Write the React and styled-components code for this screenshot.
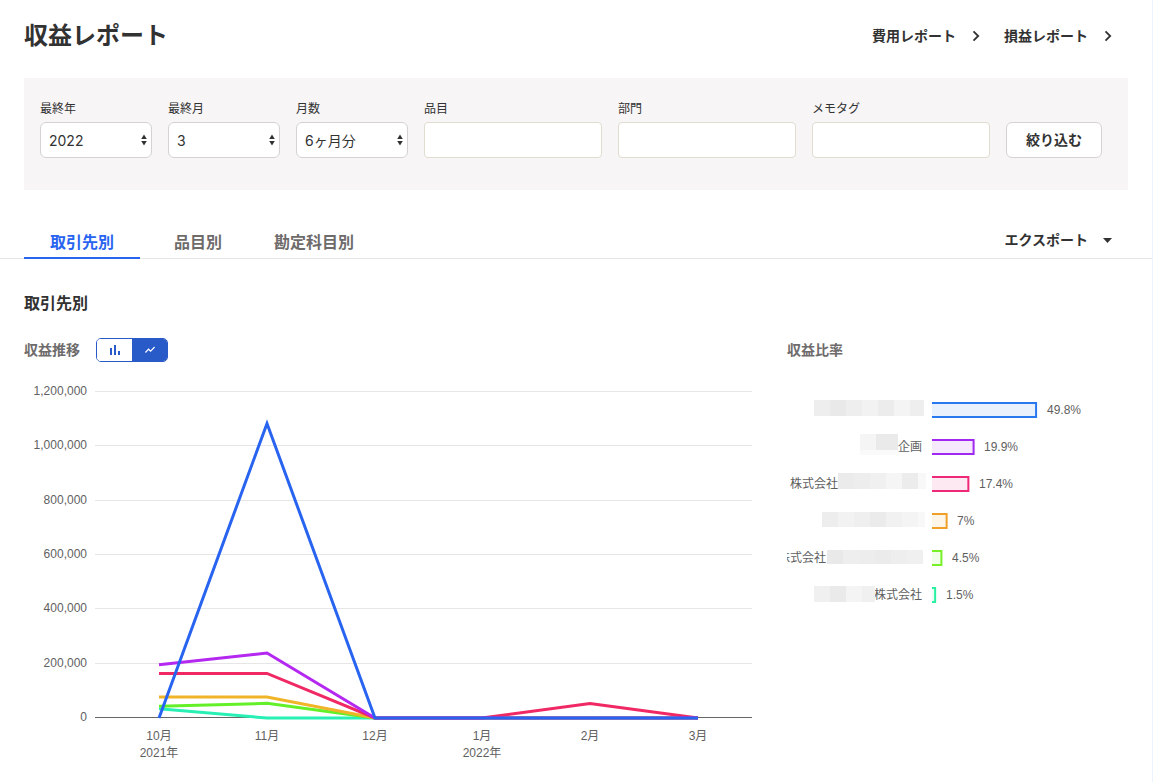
import React, { useState } from 'react';
import styled, { createGlobalStyle, css } from 'styled-components';

const GlobalStyle = createGlobalStyle`
  *, *::before, *::after { box-sizing: border-box; }
  body {
    margin: 0;
    background: #fff;
    color: #323232;
    font-family: Inter, "Noto Sans CJK JP", sans-serif;
    font-size: 14px;
    line-height: 20px;
  }
  button, input, select { font: inherit; color: inherit; }
`;

const Page = styled.div`
  min-height: 100vh;
  padding-bottom: 16px;
  border-right: 1px solid #ebf3ff;
`;

const Header = styled.header`
  display: flex;
  align-items: center;
  justify-content: space-between;
  padding: 16px 40px 22px 24px;
`;

const PageTitle = styled.h1`
  margin: 0;
  font-size: 24px;
  line-height: 40px;
  font-weight: 700;
`;

const ReportLinks = styled.nav`
  display: flex;
  gap: 24px;
`;

const actionStyle = css`
  display: inline-flex;
  align-items: center;
  gap: 16px;
  padding: 0;
  border: 0;
  background: none;
  color: #323232;
  font-size: 14px;
  line-height: 20px;
  font-weight: 700;
  text-decoration: none;
  white-space: nowrap;
  cursor: pointer;
`;

const ReportLink = styled.a`${actionStyle}`;
const ExportButton = styled.button`${actionStyle}`;

const FilterPanel = styled.form`
  display: flex;
  flex-wrap: wrap;
  align-items: flex-end;
  gap: 16px;
  margin: 0 24px;
  padding: 21px 16px 32px;
  background: #f7f5f6;
`;

const Field = styled.label`
  display: flex;
  flex: 0 1 ${(p) => p.$width};
  flex-direction: column;
  gap: 3px;
  font-size: 12px;
`;

const SelectBox = styled.span`
  position: relative;
  display: block;
`;

const Select = styled.select`
  appearance: none;
  display: block;
  width: 100%;
  height: 36px;
  padding: 2px 24px 0 8px;
  border: 1px solid #d7d2d2;
  border-radius: 6px;
  background: #fff;
  font-size: 14px;
`;

const SelectArrows = styled.svg`
  position: absolute;
  top: 12px;
  right: 5px;
  pointer-events: none;
`;

const TextInput = styled.input`
  width: 100%;
  height: 36px;
  padding: 0 8px;
  border: 1px solid #e1dcd0;
  border-radius: 4px;
  background: #fff;
  font-size: 14px;
`;

const FilterButton = styled.button`
  width: 96px;
  height: 36px;
  padding: 0;
  border: 1px solid #d7d2d2;
  border-radius: 6px;
  background: #fff;
  font-weight: 700;
  cursor: pointer;
`;

const TabBar = styled.div`
  display: flex;
  align-items: center;
  justify-content: space-between;
  margin-top: 32px;
  padding: 0 40px 0 24px;
  border-bottom: 1px solid #e6e6e6;
`;

const Tabs = styled.div`
  display: flex;
  margin-bottom: -1px;
`;

const Tab = styled.button`
  min-width: 116px;
  padding: 8px 16px 3px;
  border: 0;
  border-bottom: 2px solid ${(p) => (p.$active ? '#2864f0' : 'transparent')};
  background: none;
  color: ${(p) => (p.$active ? '#2864f0' : '#6e6b6b')};
  font-size: 16px;
  line-height: 24px;
  font-weight: 700;
  white-space: nowrap;
  cursor: pointer;
`;

const Report = styled.main`
  padding: 32px 24px 0;
`;

const SectionTitle = styled.h2`
  margin: 0 0 23px;
  font-size: 16px;
  line-height: 24px;
  font-weight: 700;
`;

const ChartGrid = styled.div`
  display: grid;
  grid-template-columns: minmax(0, 728fr) minmax(0, 341fr);
  gap: 35px;
`;

const ChartHeader = styled.div`
  display: flex;
  align-items: center;
  gap: 16px;
  height: 24px;
  margin-bottom: 16px;
`;

const ChartTitle = styled.h3`
  margin: 0;
  color: #6e6b6b;
  font-size: 14px;
  line-height: 20px;
  font-weight: 700;
`;

const Toggle = styled.div`
  display: flex;
  width: 72px;
  height: 24px;
  overflow: hidden;
  border: 1px solid #285ac8;
  border-radius: 5px;
`;

const ToggleButton = styled.button`
  display: flex;
  flex: 1;
  align-items: center;
  justify-content: center;
  padding: 0;
  border: 0;
  background: ${(p) => (p.$active ? '#285ac8' : '#fff')};
  color: ${(p) => (p.$active ? '#fff' : '#285ac8')};
  cursor: pointer;
`;

const Chart = styled.svg`
  display: block;
  width: 100%;
  height: auto;
  font-family: "Liberation Sans", "Noto Sans CJK JP", sans-serif;
  font-size: 12px;
`;

const ChartText = styled.text`
  fill: #5f5f5f;
`;

const range = (from, to) => Array.from({ length: to - from + 1 }, (_, i) => from + i);

const reportLinks = ['費用レポート', '損益レポート'];
const selects = [
  { label: '最終年', value: '2022', options: ['2020', '2021', '2022'] },
  { label: '最終月', value: '3', options: range(1, 12).map(String) },
  { label: '月数', value: '6ヶ月分', options: ['3ヶ月分', '6ヶ月分', '12ヶ月分'] },
];
const textFields = ['品目', '部門', 'メモタグ'];
const tabs = ['取引先別', '品目別', '勘定科目別'];

const months = [
  ['10月', '2021年'],
  ['11月'],
  ['12月'],
  ['1月', '2022年'],
  ['2月'],
  ['3月'],
];
const series = [
  { color: '#28f0b4', values: [34000, 0, 0, 0, 0, 0] },
  { color: '#64f028', values: [43000, 54000, 0, 0, 0, 0] },
  { color: '#f0b428', values: [77000, 77000, 0, 0, 0, 0] },
  { color: '#f02864', values: [164000, 164000, 0, 0, 53000, 0] },
  { color: '#b428f0', values: [196000, 239000, 0, 0, 0, 0] },
  { color: '#2864f0', values: [0, 1084000, 0, 0, 0, 0] },
];

const BASE_Y = 340;
const PLOT_H = 326;
const MAX = 1200000;
const pointX = (i) => 135 + Math.round(i * 107.8);
const valueY = (v) => BASE_Y - (v / MAX) * PLOT_H;

function TrendChart() {
  return (
    <Chart viewBox="0 0 728 388" role="img" aria-label="収益推移">
      {range(0, 6).map((i) => {
        const y = Math.floor(BASE_Y - 1 - (i * PLOT_H) / 6 + 0.5);
        return (
          <g key={i}>
            <rect x="71" y={y} width="657" height="1" fill={i === 0 ? '#666' : '#e6e6e6'} />
            <ChartText x="63" y={y + 4} textAnchor="end">
              {(i * 200000).toLocaleString('en-US')}
            </ChartText>
          </g>
        );
      })}
      {series.map((s) => (
        <polyline
          key={s.color}
          points={s.values.map((v, i) => `${pointX(i)},${valueY(v)}`).join(' ')}
          fill="none"
          stroke={s.color}
          strokeWidth="3"
        />
      ))}
      {months.map((lines, i) =>
        lines.map((line, row) => (
          <ChartText key={line} x={pointX(i)} y={362 + row * 17} textAnchor="middle">
            {line}
          </ChartText>
        )),
      )}
    </Chart>
  );
}

// Customer names are partly masked; each mask is a strip of grey tiles.
const shares = [
  {
    percent: 49.8, stroke: '#2878f0', fill: '#e9f1fd',
    mask: { x: 27, y: 22, width: 110, height: 16, tiles: ['#eee', '#e9e9e9', '#eee', '#f2f2f2', '#ececec', '#f4f4f4', '#eee'] },
  },
  {
    percent: 19.9, stroke: '#a028f0', fill: '#f6e9fd', name: '企画', nameX: 135, anchor: 'end',
    mask: { x: 73, y: 56, width: 38, height: 16, tiles: ['#f5f5f5', '#eaeaea', '#eaeaea'], fade: true },
  },
  {
    percent: 17.4, stroke: '#f02878', fill: '#fde9f1', name: '株式会社', nameX: 3, anchor: 'start',
    mask: { x: 51, y: 95, width: 88, height: 16, tiles: ['#ebebeb', '#ededed', '#f0f0f0', '#f5f5f5', '#ececec', '#f8f8f8'] },
  },
  {
    percent: 7, stroke: '#f0a028', fill: '#fef5e9',
    mask: { x: 35, y: 134, width: 103, height: 15, tiles: ['#ededed', '#f2f2f2', '#efefef', '#ebebeb', '#f1f1f1', '#f4f4f4', '#f8f8f8'] },
  },
  {
    percent: 4.5, stroke: '#78f028', fill: '#f1fee9', name: '株式会社', nameX: -9, anchor: 'start',
    mask: { x: 40, y: 172, width: 96, height: 14, tiles: ['#e9e9e9', '#eee', '#ededed', '#ebebeb', '#eee', '#f0f0f0'] },
  },
  {
    percent: 1.5, stroke: '#28f0a0', fill: '#e9fef5', name: '株式会社', nameX: 135, anchor: 'end',
    mask: { x: 27, y: 208, width: 61, height: 16, tiles: ['#f0f0f0', '#eaeaea', '#f4f4f4', '#f0f0f0'] },
  },
];

function Mask({ x, y, width, height, tiles, fade }) {
  return (
    <>
      {tiles.map((color, i) => (
        <rect key={i} x={x + i * 16} y={y} width={Math.min(16, width - i * 16)} height={height} fill={color} />
      ))}
      {fade && <rect x={x} y={y + height} width={width} height="5" fill="#fafafa" />}
    </>
  );
}

function ShareChart() {
  return (
    <Chart viewBox="0 0 341 240" role="img" aria-label="収益比率">
      {shares.map((s, i) => {
        const y = 25 + i * 37;
        const end = 145 + s.percent * 2.09;
        return (
          <g key={s.percent}>
            {s.name && (
              <ChartText x={s.nameX} y={y + 11} textAnchor={s.anchor}>{s.name}</ChartText>
            )}
            <Mask {...s.mask} />
            <rect x="145" y={y} width={end - 145} height="14" fill={s.fill} />
            <path d={`M145 ${y}H${end}V${y + 14}H145`} fill="none" stroke={s.stroke} strokeWidth="2" />
            <ChartText x={Math.floor(end + 11)} y={y + 11}>{s.percent}%</ChartText>
          </g>
        );
      })}
    </Chart>
  );
}

export default function App() {
  const [tab, setTab] = useState(tabs[0]);
  const [mode, setMode] = useState('line');

  return (
    <>
      <GlobalStyle />
      <Page>
        <Header>
          <PageTitle>収益レポート</PageTitle>
          <ReportLinks>
            {reportLinks.map((label) => (
              <ReportLink key={label} href="#">
                {label}
                <svg width="8" height="12" viewBox="0 0 8 12" fill="none" stroke="currentColor" strokeWidth="1.8" aria-hidden="true">
                  <path d="M1.5 1.3 6.2 6 1.5 10.7" />
                </svg>
              </ReportLink>
            ))}
          </ReportLinks>
        </Header>

        <FilterPanel onSubmit={(e) => e.preventDefault()}>
          {selects.map((s) => (
            <Field key={s.label} $width="112px">
              {s.label}
              <SelectBox>
                <Select defaultValue={s.value}>
                  {s.options.map((o) => <option key={o}>{o}</option>)}
                </Select>
                <SelectArrows width="6" height="12" viewBox="0 0 6 12" fill="#323232" aria-hidden="true">
                  <path d="M3 .5 5.8 5H.2zM3 11.5.2 7h5.6z" />
                </SelectArrows>
              </SelectBox>
            </Field>
          ))}
          {textFields.map((label) => (
            <Field key={label} $width="178px">
              {label}
              <TextInput type="text" />
            </Field>
          ))}
          <FilterButton type="submit">絞り込む</FilterButton>
        </FilterPanel>

        <TabBar>
          <Tabs role="tablist">
            {tabs.map((label) => (
              <Tab
                key={label}
                type="button"
                role="tab"
                aria-selected={tab === label}
                $active={tab === label}
                onClick={() => setTab(label)}
              >
                {label}
              </Tab>
            ))}
          </Tabs>
          <ExportButton type="button">
            エクスポート
            <svg width="8" height="5" viewBox="0 0 8 5" fill="currentColor" overflow="visible" aria-hidden="true">
              <path d="M-1 0h9L3.5 5z" />
            </svg>
          </ExportButton>
        </TabBar>

        <Report>
          <SectionTitle>{tab}</SectionTitle>
          <ChartGrid>
            <section>
              <ChartHeader>
                <ChartTitle>収益推移</ChartTitle>
                <Toggle>
                  <ToggleButton type="button" aria-label="棒グラフ" aria-pressed={mode === 'bar'} $active={mode === 'bar'} onClick={() => setMode('bar')}>
                    <svg width="10" height="10" viewBox="0 0 10 10" fill="currentColor" aria-hidden="true">
                      <path d="M0 3h2v7H0zM4 0h2v10H4zM8 6h2v4H8z" />
                    </svg>
                  </ToggleButton>
                  <ToggleButton type="button" aria-label="折れ線グラフ" aria-pressed={mode === 'line'} $active={mode === 'line'} onClick={() => setMode('line')}>
                    <svg width="10" height="8" viewBox="0 0 10 8" fill="none" stroke="currentColor" strokeWidth="1.2" aria-hidden="true">
                      <path d="M.4 6.5 3.6 3.2 5.6 5.1 9.6 1" />
                    </svg>
                  </ToggleButton>
                </Toggle>
              </ChartHeader>
              <TrendChart />
            </section>
            <section>
              <ChartHeader>
                <ChartTitle>収益比率</ChartTitle>
              </ChartHeader>
              <ShareChart />
            </section>
          </ChartGrid>
        </Report>
      </Page>
    </>
  );
}
